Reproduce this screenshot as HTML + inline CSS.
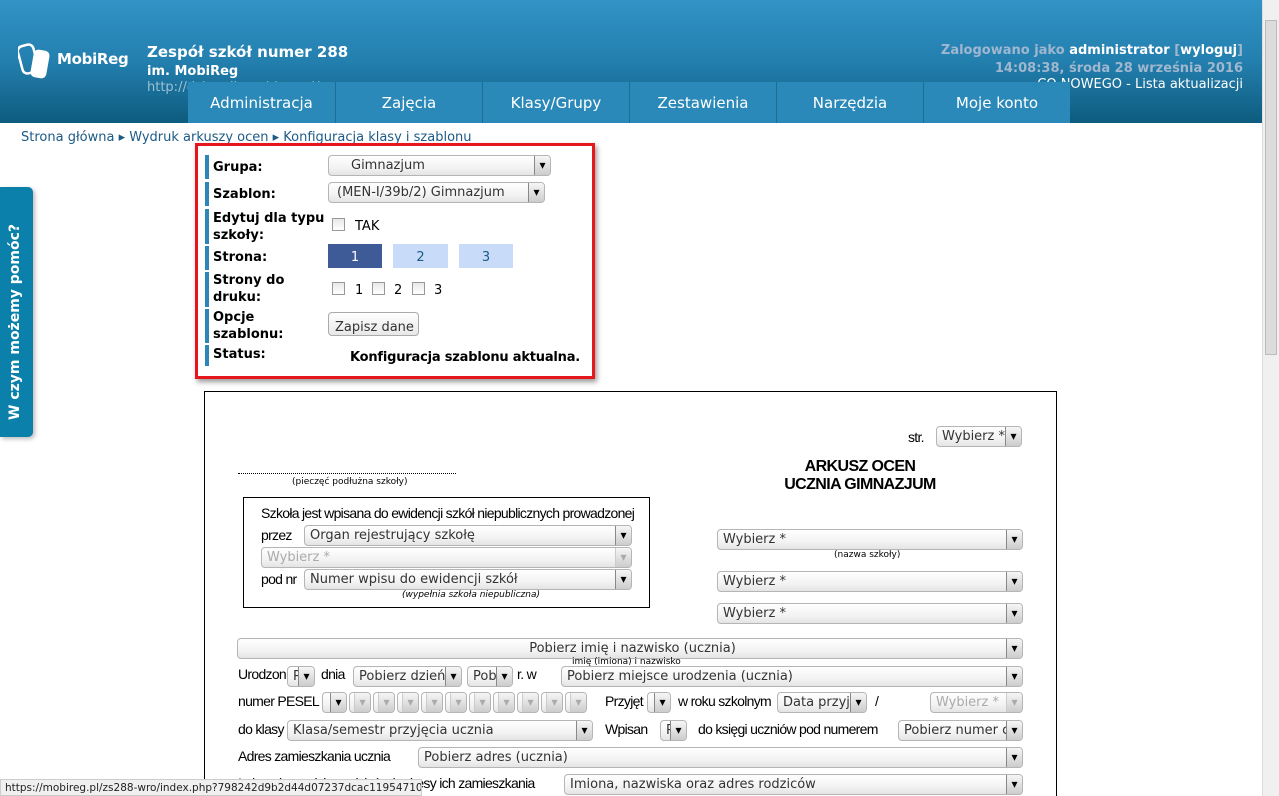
<!DOCTYPE html>
<html><head><meta charset="utf-8">
<style>
*{box-sizing:border-box;margin:0;padding:0}
html,body{width:1279px;height:796px;overflow:hidden}
body{background:#fff;font-family:"DejaVu Sans",Verdana,sans-serif;position:relative}
.hdr{position:absolute;left:0;top:0;width:1262px;height:123px;background:linear-gradient(#3293c6,#237fae 50%,#0e5c7f)}
.abs{position:absolute;white-space:nowrap}
.tab{position:absolute;top:82px;height:41px;width:147px;background:#2a89b8;color:#fff;font-size:15px;text-align:center;line-height:43px;border-left:1px solid #1d6d94}
.scroll{position:absolute;left:1262px;top:0;width:17px;height:796px;background:#f0f0f0;border-left:1px solid #ddd}
.sel{position:absolute;height:21px;border:1px solid #b5b5b5;border-radius:4px;background:linear-gradient(#fff,#f3f3f3 60%,#e4e4e4);font-size:13px;color:#333;line-height:19px;padding-left:5px;overflow:hidden;white-space:nowrap}
.sel::after{content:"▾";position:absolute;right:0;top:0;width:15px;height:19px;background:linear-gradient(#f6f6f6,#ccc);border-left:1px solid #888;color:#000;font-size:12px;text-align:center;line-height:19px}
.dis{color:#aaa}.dis::after{color:#aaa;border-left-color:#ccc}
.lbl{position:absolute;font-family:"Liberation Sans",Arial,sans-serif;font-size:14px;letter-spacing:-0.7px;color:#000;white-space:nowrap}
.fl{position:absolute;left:205px;width:4px;background:#2d86b8}
.fb{position:absolute;font-size:13px;font-weight:bold;color:#000;line-height:17px}
.cb{position:absolute;width:13px;height:13px;border:1px solid #999;background:linear-gradient(#e8e8e8,#fff)}
.small{position:absolute;font-size:9px;color:#000;white-space:nowrap}
</style></head><body>
<div class="hdr"></div>
<svg class="abs" style="left:18px;top:42px" width="34" height="38" viewBox="0 0 34 38"><rect x="2" y="3" width="16" height="28" rx="5" fill="none" stroke="#fff" stroke-width="2.5" transform="rotate(-15 10 17)"/><rect x="14" y="8" width="16" height="28" rx="5" fill="#fff" transform="rotate(10 22 22)"/></svg>
<div class="abs" style="left:57px;top:50px;font-size:15px;font-weight:bold;color:#fff;letter-spacing:-0.3px">MobiReg</div>
<div class="abs" style="left:147px;top:43px;font-size:15px;font-weight:bold;color:#fff">Zespół szkół numer 288</div>
<div class="abs" style="left:147px;top:64px;font-size:13px;font-weight:bold;color:#fff">im. MobiReg</div>
<div class="abs" style="left:147px;top:80px;font-size:13px;color:#9cc0d4">http://dziennik.mobireg.pl/</div>
<div class="abs" style="right:36px;top:43px;font-size:13px;font-weight:bold;color:#9fb7cf">Zalogowano jako <span style="color:#fff">administrator</span> [<span style="color:#fff">wyloguj</span>]</div>
<div class="abs" style="right:36px;top:61px;font-size:13px;font-weight:bold;color:#9fb7cf">14:08:38, środa 28 września 2016</div>
<div class="abs" style="right:36px;top:77px;font-size:13px;color:#fff">CO NOWEGO - Lista aktualizacji</div>
<div class="tab" style="left:188px;border-left:none">Administracja</div>
<div class="tab" style="left:335px">Zajęcia</div>
<div class="tab" style="left:482px">Klasy/Grupy</div>
<div class="tab" style="left:629px">Zestawienia</div>
<div class="tab" style="left:776px">Narzędzia</div>
<div class="tab" style="left:923px">Moje konto</div>
<div class="scroll"><div style="position:absolute;left:2px;top:20px;width:12px;height:335px;background:#dcdcdc;border:1px solid #bbb"></div></div>
<div class="abs" style="left:21px;top:130px;font-size:13px;color:#1d5a86">Strona główna ▸ Wydruk arkuszy ocen ▸ Konfiguracja klasy i szablonu</div>
<div class="abs" style="left:0;top:187px;width:33px;height:250px;background:#0b80aa;border-radius:0 5px 5px 0;box-shadow:2px 2px 4px #bbb"></div>
<div class="abs" style="left:7px;top:420px;transform:rotate(-90deg);transform-origin:0 0;font-size:14px;font-weight:bold;color:#fff">W czym możemy pomóc?</div>

<div class="abs" style="left:195px;top:143px;width:400px;height:236px;border:3px solid #e5161c;box-shadow:2px 3px 5px #999;background:#fff"></div>
<div class="fl" style="top:155px;height:24px"></div><div class="fl" style="top:182px;height:24px"></div><div class="fl" style="top:209px;height:35px"></div><div class="fl" style="top:246px;height:24px"></div><div class="fl" style="top:272px;height:35px"></div><div class="fl" style="top:309px;height:34px"></div><div class="fl" style="top:345px;height:21px"></div>
<div class="fb" style="left:213px;top:159px">Grupa:</div>
<div class="fb" style="left:213px;top:186px">Szablon:</div>
<div class="fb" style="left:213px;top:210px">Edytuj dla typu<br>szkoły:</div>
<div class="fb" style="left:213px;top:249px">Strona:</div>
<div class="fb" style="left:213px;top:272px">Strony do<br>druku:</div>
<div class="fb" style="left:213px;top:309px">Opcje<br>szablonu:</div>
<div class="fb" style="left:213px;top:346px">Status:</div>
<div class="sel" style="left:328px;top:155px;width:223px;padding-left:22px">Gimnazjum</div>
<div class="sel" style="left:328px;top:182px;width:217px;padding-left:8px">(MEN-I/39b/2) Gimnazjum</div>
<div class="cb" style="left:332px;top:218px"></div><div class="abs" style="left:355px;top:219px;font-size:13px">TAK</div>
<div class="abs" style="left:328px;top:244px;width:54px;height:24px;background:#3e5b98;color:#fff;font-size:13px;text-align:center;line-height:28px">1</div>
<div class="abs" style="left:393px;top:244px;width:55px;height:24px;background:#c8dcfa;color:#1d5a86;font-size:13px;text-align:center;line-height:28px">2</div>
<div class="abs" style="left:459px;top:244px;width:54px;height:24px;background:#c8dcfa;color:#1d5a86;font-size:13px;text-align:center;line-height:28px">3</div>
<div class="cb" style="left:332px;top:282px"></div><div class="abs" style="left:355px;top:283px;font-size:13px">1</div>
<div class="cb" style="left:372px;top:282px"></div><div class="abs" style="left:394px;top:283px;font-size:13px">2</div>
<div class="cb" style="left:412px;top:282px"></div><div class="abs" style="left:434px;top:283px;font-size:13px">3</div>
<div class="abs" style="left:328px;top:312px;width:91px;height:24px;border:1px solid #aaa;border-radius:4px;background:linear-gradient(#fff,#e8e8e8);font-size:13px;color:#333;padding:9px 0 0 6px;line-height:12px;overflow:hidden">Zapisz dane</div>
<div class="fb" style="left:350px;top:349px;letter-spacing:-0.2px">Konfiguracja szablonu aktualna.</div>

<div class="abs" style="left:204px;top:391px;width:853px;height:440px;border:1px solid #000"></div>
<div class="lbl" style="left:908px;top:429px">str.</div>
<div class="sel" style="left:936px;top:426px;width:86px">Wybierz *</div>
<div class="abs" style="left:238px;top:473px;width:218px;border-top:1px dotted #000"></div>
<div class="small" style="left:292px;top:477px">(pieczęć podłużna szkoły)</div>
<div class="abs" style="left:760px;top:458px;width:200px;text-align:center;font-family:'Liberation Sans',Arial,sans-serif;font-weight:bold;font-size:16px;letter-spacing:-0.6px;line-height:18px">ARKUSZ OCEN<br>UCZNIA GIMNAZJUM</div>
<div class="abs" style="left:243px;top:497px;width:407px;height:111px;border:1px solid #000"></div>
<div class="lbl" style="left:261px;top:505px">Szkoła jest wpisana do ewidencji szkół niepublicznych prowadzonej</div>
<div class="lbl" style="left:261px;top:527px">przez</div>
<div class="sel" style="left:304px;top:525px;width:328px">Organ rejestrujący szkołę</div>
<div class="sel dis" style="left:261px;top:547px;width:371px">Wybierz *</div>
<div class="lbl" style="left:261px;top:571px">pod nr</div>
<div class="sel" style="left:304px;top:569px;width:328px">Numer wpisu do ewidencji szkół</div>
<div class="small" style="left:402px;top:590px;font-style:italic">(wypełnia szkoła niepubliczna)</div>
<div class="sel" style="left:717px;top:529px;width:306px">Wybierz *</div>
<div class="small" style="left:834px;top:550px">(nazwa szkoły)</div>
<div class="sel" style="left:717px;top:571px;width:306px">Wybierz *</div>
<div class="sel" style="left:717px;top:603px;width:306px">Wybierz *</div>
<div class="sel" style="left:237px;top:638px;width:786px;text-align:center">Pobierz imię i nazwisko (ucznia)</div>
<div class="small" style="left:572px;top:657px">imię (imiona) i nazwisko</div>
<div class="lbl" style="left:238px;top:666px">Urodzon</div>
<div class="sel" style="left:287px;top:666px;width:28px">P</div>
<div class="lbl" style="left:321px;top:666px">dnia</div>
<div class="sel" style="left:353px;top:666px;width:109px">Pobierz dzień</div>
<div class="sel" style="left:467px;top:666px;width:46px">Pob</div>
<div class="lbl" style="left:517px;top:666px">r. w</div>
<div class="sel" style="left:561px;top:666px;width:462px">Pobierz miejsce urodzenia (ucznia)</div>
<div class="lbl" style="left:238px;top:693px">numer PESEL</div>
<div class="sel" style="left:322px;top:692px;width:25px"></div>
<div class="sel dis" style="left:349px;top:692px;width:22px"></div><div class="sel dis" style="left:373px;top:692px;width:22px"></div><div class="sel dis" style="left:397px;top:692px;width:22px"></div><div class="sel dis" style="left:421px;top:692px;width:22px"></div><div class="sel dis" style="left:445px;top:692px;width:22px"></div><div class="sel dis" style="left:469px;top:692px;width:22px"></div><div class="sel dis" style="left:493px;top:692px;width:22px"></div><div class="sel dis" style="left:517px;top:692px;width:22px"></div><div class="sel dis" style="left:541px;top:692px;width:22px"></div><div class="sel dis" style="left:565px;top:692px;width:22px"></div>
<div class="lbl" style="left:605px;top:693px">Przyjęt</div>
<div class="sel" style="left:647px;top:692px;width:24px">P</div>
<div class="lbl" style="left:678px;top:693px">w roku szkolnym</div>
<div class="sel" style="left:777px;top:692px;width:90px">Data przyj</div>
<div class="lbl" style="left:875px;top:693px">/</div>
<div class="sel dis" style="left:930px;top:692px;width:93px">Wybierz *</div>
<div class="lbl" style="left:238px;top:721px">do klasy</div>
<div class="sel" style="left:287px;top:720px;width:306px">Klasa/semestr przyjęcia ucznia</div>
<div class="lbl" style="left:605px;top:721px">Wpisan</div>
<div class="sel" style="left:660px;top:720px;width:27px">P</div>
<div class="lbl" style="left:698px;top:721px">do księgi uczniów pod numerem</div>
<div class="sel" style="left:898px;top:720px;width:125px">Pobierz numer c</div>
<div class="lbl" style="left:238px;top:748px">Adres zamieszkania ucznia</div>
<div class="sel" style="left:418px;top:747px;width:605px">Pobierz adres (ucznia)</div>
<div class="lbl" style="left:238px;top:775px">Imiona i nazwiska rodziców i adresy ich zamieszkania</div>
<div class="sel" style="left:564px;top:774px;width:459px">Imiona, nazwiska oraz adres rodziców</div>
<div class="abs" style="left:0;top:779px;width:422px;height:17px;background:#f0f0f0;border:1px solid #ccc;font-size:10.5px;color:#222;padding:2px 4px;line-height:12px;overflow:hidden">https://mobireg.pl/zs288-wro/index.php?798242d9b2d44d07237dcac11954710c</div>
</body></html>
